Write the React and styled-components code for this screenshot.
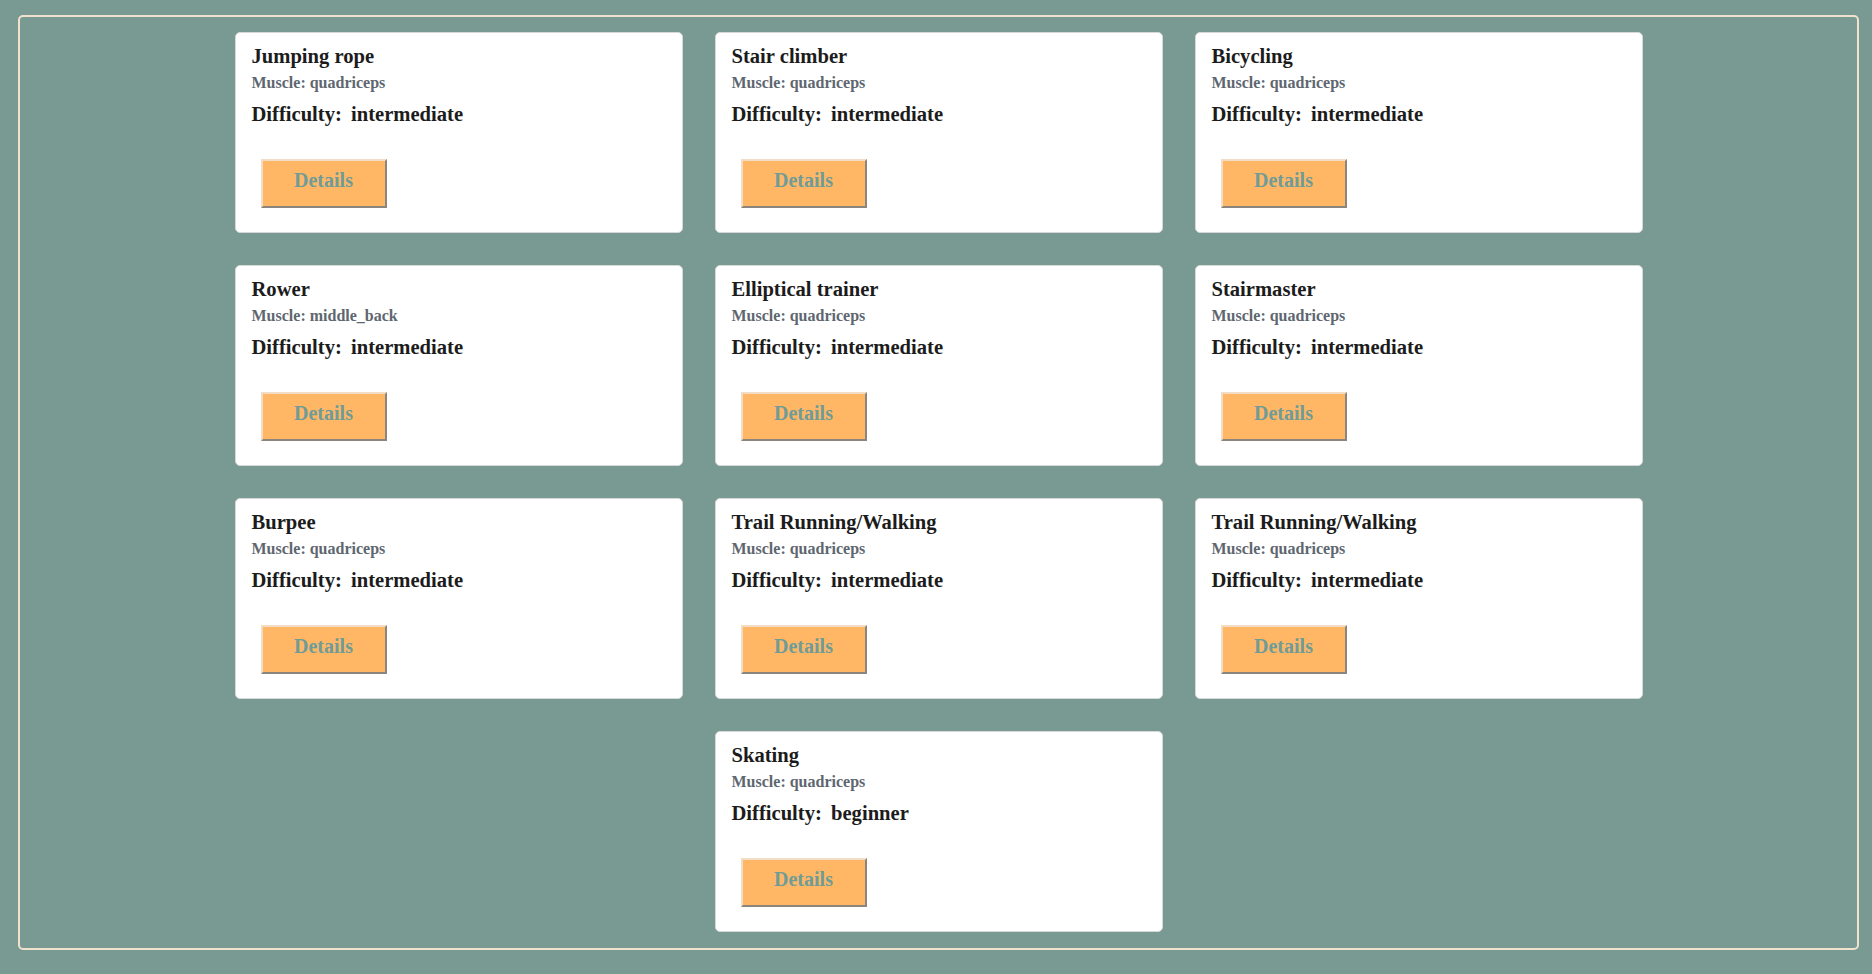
import React from 'react';
import styled, { createGlobalStyle } from 'styled-components';

const exercises = [
  { name: 'Jumping rope', muscle: 'quadriceps', difficulty: 'intermediate' },
  { name: 'Stair climber', muscle: 'quadriceps', difficulty: 'intermediate' },
  { name: 'Bicycling', muscle: 'quadriceps', difficulty: 'intermediate' },
  { name: 'Rower', muscle: 'middle_back', difficulty: 'intermediate' },
  { name: 'Elliptical trainer', muscle: 'quadriceps', difficulty: 'intermediate' },
  { name: 'Stairmaster', muscle: 'quadriceps', difficulty: 'intermediate' },
  { name: 'Burpee', muscle: 'quadriceps', difficulty: 'intermediate' },
  { name: 'Trail Running/Walking', muscle: 'quadriceps', difficulty: 'intermediate' },
  { name: 'Trail Running/Walking', muscle: 'quadriceps', difficulty: 'intermediate' },
  { name: 'Skating', muscle: 'quadriceps', difficulty: 'beginner' },
];

const GlobalStyle = createGlobalStyle`
  body {
    margin: 0;
    background: #789a92;
    font-family: "Liberation Serif", "DejaVu Serif", serif;
  }
`;

const App = () => {
  return (
    <>
      <GlobalStyle />
      <Frame>
        <CardList>
          {exercises.map((item, index) => (
            <Card key={index}>
              <Title>{item.name}</Title>
              <Muscle>Muscle: {item.muscle}</Muscle>
              <Difficulty>
                Difficulty: <Level>{item.difficulty}</Level>
              </Difficulty>
              <DetailsBtn>Details</DetailsBtn>
            </Card>
          ))}
        </CardList>
      </Frame>
    </>
  );
};

const Frame = styled.div`
  margin: 15px 13px 24px 18px;
  border: 2px solid #f0e2cc;
  border-radius: 5px;
  padding: 15px 0 16px;
`;

const CardList = styled.div`
  display: flex;
  flex-wrap: wrap;
  justify-content: center;
  gap: 32px 32px;
`;

const Card = styled.div`
  box-sizing: border-box;
  width: 448px;
  height: 201px;
  background: #fff;
  border: 1px solid #d8d8d8;
  border-radius: 5px;
  padding: 11px 16px 24px;
  display: flex;
  flex-direction: column;
  align-items: flex-start;
`;

const Title = styled.h3`
  margin: 0;
  font-size: 20.6px;
  line-height: 24px;
  font-weight: 700;
  color: #1c1c1c;
`;

const Muscle = styled.p`
  margin: 5px 0 0;
  font-size: 16px;
  line-height: 20px;
  font-weight: 700;
  color: #5e6770;
`;

const Difficulty = styled.p`
  margin: 9px 0 0;
  font-size: 20.6px;
  line-height: 24px;
  font-weight: 700;
  color: #1c1c1c;
`;

const Level = styled.span`
  margin-left: 4px;
`;

const DetailsBtn = styled.button`
  margin: 33px 0 0 9px;
  width: 126px;
  height: 49px;
  padding: 0 0 7px;
  background: #ffb766;
  border: 2px solid;
  border-color: #f2dcc6 #8b857e #8b857e #f2dcc6;
  font-family: inherit;
  font-size: 20px;
  font-weight: 700;
  color: #6f9c97;
  cursor: pointer;
`;

export default App;
